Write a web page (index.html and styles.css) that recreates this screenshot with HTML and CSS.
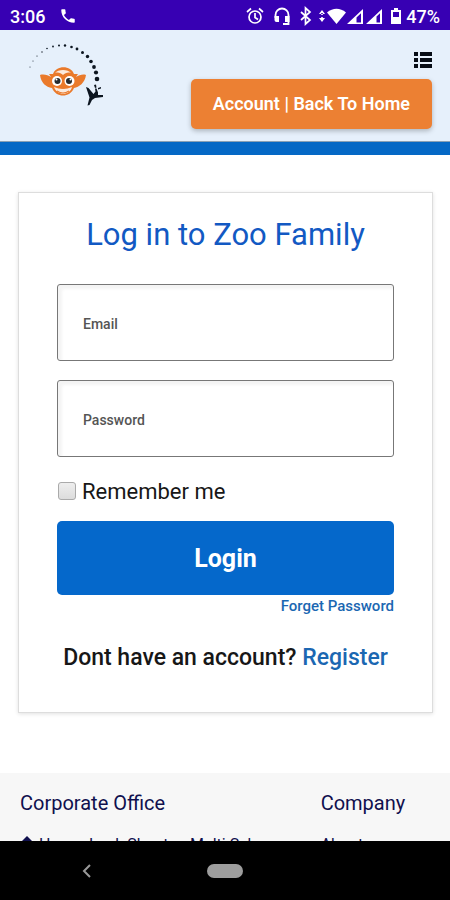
FILE: index.html
```html
<!DOCTYPE html>
<html lang="en">
<head>
<meta charset="utf-8">
<meta name="viewport" content="width=device-width, initial-scale=1">
<title>Log in to Zoo Family</title>
<link rel="stylesheet" href="styles.css">
</head>
<body>
<div class="screen">
  <div class="status">
    <span class="time">3:06</span>
    <svg class="phone" width="18" height="18" viewBox="0 0 24 24" fill="currentColor"><path d="M6.600 10.800c1.400 2.800 3.800 5.100 6.600 6.600l2.200-2.200c.3-.3.700-.4 1-.2 1.100.4 2.300.6 3.600.6.600 0 1 .4 1 1V20c0 .6-.4 1-1 1C10.600 21 3 13.400 3 4c0-.6.400-1 1-1h3.500c.6 0 1 .4 1 1 0 1.300.2 2.500.6 3.600.1.300 0 .7-.2 1z"/></svg>
    <svg class="tray" width="137" height="20" viewBox="0 0 137 20" fill="none" stroke="currentColor">
      <g stroke-width="1.700"><circle cx="10" cy="11" r="6"/><path d="M10 7v4.500l3 2M2 6l4-3.500M18 6l-4-3.500"/></g>
      <path stroke-width="1.800" d="M30.500 12V9a6.500 6.500 0 0 1 13 0v9H38"/>
      <path fill="currentColor" stroke="none" d="M29.500 10h4.500v6h-2.500a2 2 0 0 1-2-2zM40 10h4.500v6H40z"/>
      <path stroke-width="1.700" d="M56 6l9 8-4.500 4V2l4.500 4-9 8"/>
      <g fill="currentColor" stroke="none">
        <path d="M74 8h6l-3-4zM74 12h6l-3 4zM76.200 7h1.600v2h-1.600zM76.200 11h1.600v2h-1.600z"/>
        <path d="M82 6.500c6-5 13-5 19 0L91.500 18z"/>
        <path fill-rule="evenodd" d="M102 18L118 3v15zM111.500 11.500V16.500H116V7.300z"/>
        <path fill-rule="evenodd" d="M121 18L137 3v15zM131.500 10.500V16.500H135V7.300z"/>
      </g>
    </svg>
    <svg class="battery" width="12" height="18" viewBox="0 0 12 18" fill="currentColor"><path fill-rule="evenodd" d="M4 1h4v2h3v14H1V3h3zM3 5v5h6V5z"/></svg>
    <span class="percent">47%</span>
  </div>

  <div class="page">
    <header class="header">
      <a class="logo" href="#" aria-label="Zoo Family">
        <svg width="84" height="66" viewBox="0 0 84 66">
          <g fill="#0c1520">
            <circle cx="2" cy="25" r=".5"/><circle cx="5" cy="19" r=".5"/><circle cx="9" cy="14" r=".6"/><circle cx="14" cy="10" r=".7"/><circle cx="19" cy="6.500" r=".8"/><circle cx="25" cy="4.500" r=".9"/><circle cx="31" cy="3.500" r="1"/><circle cx="37" cy="3.500" r="1.200"/><circle cx="43.500" cy="5" r="1.300"/><circle cx="49" cy="7" r="1.400"/><circle cx="54.500" cy="10.500" r="1.500"/><circle cx="59.500" cy="14.500" r="1.700"/><circle cx="63" cy="19.500" r="1.800"/><circle cx="66" cy="25" r="1.900"/><circle cx="68" cy="30.500" r="2.100"/><circle cx="69" cy="37" r="2.300"/>
            <path d="M58 45l2.500 1 5 6 2-2.500-.5-3 1.500 0 1.500 4 0 2.500 5 0v2l-8 1-3 2-2.500 5-2 .5 2-8z"/>
            <path d="M66 43l2-.5.500 3-1.500.5zM70 46l3-1v1.500l-3 1z"/>
          </g>
          <path fill="#ea7a2b" d="M12 33c4-1 8 0 11 2l-2-3h4c3-9 18-9 21 0h4l-2 3c3-2 7-3 10-2-1 8-7 12-12 13-4 10-18 10-22 0-6-1-11-5-12-13z"/>
          <path fill="#fbeadd" d="M27 31c3-4 13-4 16 0-3-1-6 0-8 2-2-2-5-3-8-2zM26 45q9 4 18 0c-2 9-15 9-18 0z"/>
          <path fill="none" stroke="#ea7a2b" stroke-width="1.200" d="M29 49q6 4 12 0M33 46l2-2 2 2"/>
          <circle cx="29" cy="39" r="5" fill="#fff"/><circle cx="41.500" cy="39" r="5" fill="#fff"/>
          <circle cx="29.500" cy="39" r="3" fill="#252b30"/><circle cx="41" cy="39" r="3" fill="#252b30"/>
          <circle cx="28.500" cy="37.500" r="1" fill="#fff"/><circle cx="42.500" cy="37.500" r="1" fill="#fff"/>
        </svg>
      </a>
      <div class="actions">
        <button class="menu" type="button" aria-label="Menu">
          <svg width="18" height="16" viewBox="0 0 18 16" fill="#080d16"><path d="M0 0h4v4H0zM6 0h12v4H6zM0 6h4v4H0zM6 6h12v4H6zM0 12h4v4H0zM6 12h12v4H6z"/></svg>
        </button>
        <a class="account" href="#">Account | Back To Home</a>
      </div>
    </header>

    <main class="main">
      <form class="card">
        <h1>Log in to Zoo Family</h1>
        <input class="field" type="email" placeholder="Email" aria-label="Email">
        <input class="field" type="password" placeholder="Password" aria-label="Password">
        <label class="remember"><input type="checkbox"><span>Remember me</span></label>
        <button class="login" type="button">Login</button>
        <a class="forget" href="#">Forget Password</a>
        <p class="signup">Dont have an account? <a href="#">Register</a></p>
      </form>
    </main>

    <footer class="footer">
      <section>
        <h2>Corporate Office</h2>
        <p class="address"><svg width="14" height="18" viewBox="0 0 14 18" fill="#10104e"><path d="M7 0l7 7v11H0V7z"/></svg>House Lank Shantan Multi Scheme</p>
      </section>
      <section>
        <h2>Company</h2>
        <p><a href="#">About</a></p>
      </section>
    </footer>
  </div>

  <nav class="navbar">
    <button class="back" type="button" aria-label="Back"><svg width="10" height="14" viewBox="0 0 10 14" fill="none" stroke="#999" stroke-width="2"><path d="M8 1L2 7l6 6"/></svg></button>
    <button class="home" type="button" aria-label="Home"></button>
    <span></span>
  </nav>
</div>
</body>
</html>
```
FILE: styles.css
```css
* { box-sizing: border-box; }
body {
  margin: 0;
  font-family: Roboto, "Liberation Sans", sans-serif;
  color: #171717;
  background: #fff;
}
a { color: #1b67b2; text-decoration: none; }
button { border: 0; padding: 0; background: none; font-family: inherit; }
h1, h2, p { margin: 0; }
svg { display: block; flex: none; }

.screen { display: flex; flex-direction: column; height: 100vh; }

.status {
  display: flex;
  flex: none;
  align-items: center;
  height: 30px;
  padding: 2px 10px 0;
  background: #3700b3;
  color: #fff;
  font-size: 18px;
  font-weight: 500;
}
.phone { margin-left: 14px; }
.tray { margin-left: auto; }
.battery { margin-left: 8px; }
.percent { margin-left: 4px; }

.page { flex: 1; min-height: 0; overflow: hidden; }

.header {
  display: flex;
  justify-content: space-between;
  padding: 12px 18px 13px 28px;
  background: #e6f0fb;
  border-bottom: 13px solid #0568c5;
  box-shadow: inset 0 -1px #8aa0b4;
}
.actions { display: flex; flex-direction: column; align-items: flex-end; gap: 11px; padding-top: 10px; }
.menu { height: 16px; }
.account {
  padding: 0 22px;
  border-radius: 5px;
  background: #ec8033;
  box-shadow: 0 2px 5px rgba(0, 0, 0, .25);
  color: #fff;
  font-size: 18px;
  font-weight: 600;
  line-height: 50px;
}

.main { padding: 37px 17px 60px 18px; }
.card {
  display: flex;
  flex-direction: column;
  padding: 19px 38px 38px;
  border: 1px solid #ddd;
  box-shadow: 0 1px 4px rgba(0, 0, 0, .12);
}
h1 {
  margin-bottom: 27px;
  color: #1259c3;
  font-size: 31px;
  font-weight: 400;
  line-height: 45px;
  text-align: center;
  white-space: nowrap;
}
.field {
  width: 100%;
  height: 77px;
  margin-bottom: 19px;
  padding: 2px 25px 0;
  border: 1px solid #777;
  border-radius: 3px;
  background: #fff;
  box-shadow: inset 4px 4px 3px #f4f4f4;
  color: #333;
  font-family: inherit;
  font-size: 14px;
  font-weight: 500;
}
.field::placeholder { color: #555; opacity: 1; }
.remember {
  display: flex;
  align-items: center;
  gap: 6px;
  height: 30px;
  margin-bottom: 15px;
  font-size: 22px;
}
.remember input {
  appearance: none;
  width: 18px;
  height: 18px;
  margin: 0 0 0 1px;
  border: 1px solid #aaa;
  border-radius: 3px;
  background: linear-gradient(#eee, #dcdcdc);
}
.login {
  height: 74px;
  border-radius: 5px;
  background: #0568cb;
  color: #fff;
  font-size: 25px;
  font-weight: 700;
}
.forget { align-self: flex-end; font-size: 15px; font-weight: 500; line-height: 22px; }
.signup {
  margin-top: 25px;
  font-size: 23px;
  font-weight: 500;
  line-height: 32px;
  text-align: center;
  white-space: nowrap;
}

.footer {
  display: grid;
  grid-template-columns: 11fr 4fr;
  padding: 15px 20px 20px;
  background: #f7f7f7;
  color: #10104e;
}
h2 { font-size: 20px; font-weight: 400; line-height: 30px; }
.footer section { min-width: 0; }
.footer p { margin-top: 15px; font-size: 16px; line-height: 24px; white-space: nowrap; }
.footer a { color: inherit; }
.address { display: flex; align-items: center; gap: 5px; }

.navbar {
  display: grid;
  flex: none;
  grid-template-columns: 1fr auto 1fr;
  align-items: center;
  height: 59px;
  background: #000;
}
.navbar button { justify-self: center; }
.navbar .back { margin-right: 34px; }
.navbar .home { width: 36px; height: 14px; border-radius: 7px; background: #9d9d9d; }
```
